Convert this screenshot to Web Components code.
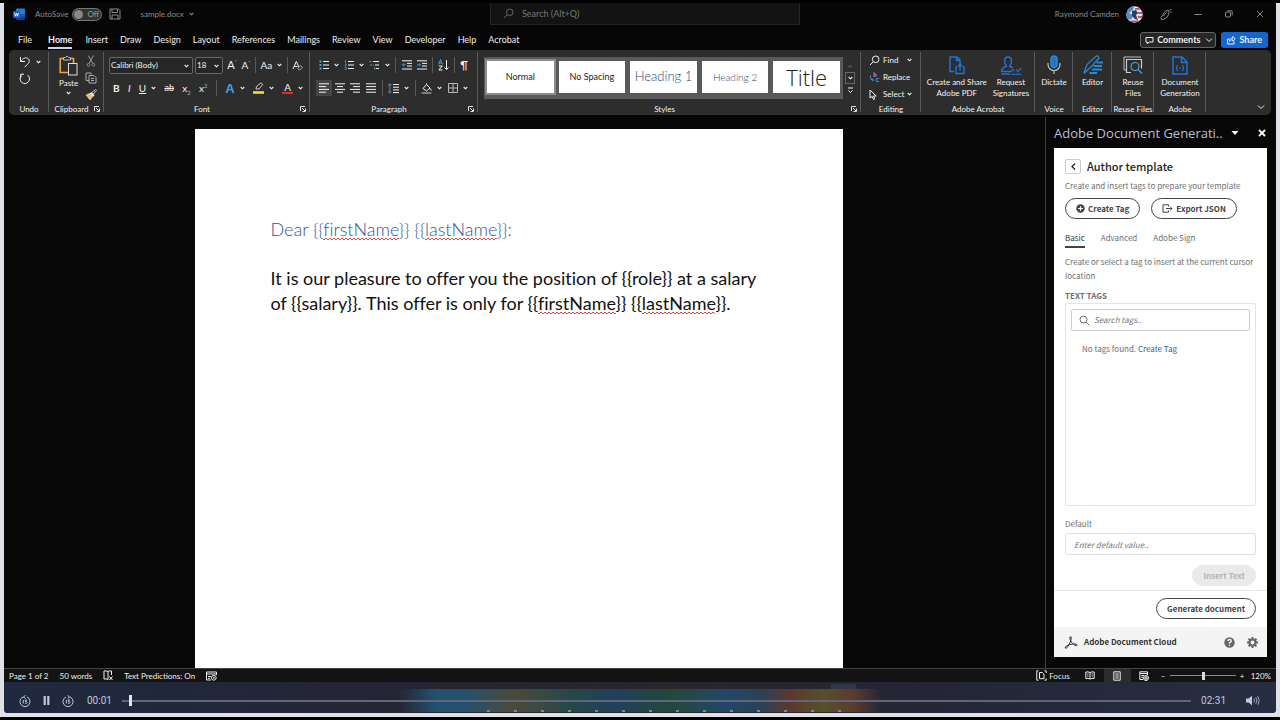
<!DOCTYPE html>
<html lang="en">
<head>
<meta charset="utf-8">
<title>sample.docx - Word</title>
<style>
  html, body { margin: 0; height: 100%; background: #000; }
  body { font: 8px/12px Lato, "Noto Sans", sans-serif; color: #eee; }
</style>
</head>
<body>
<word-window></word-window>

<script>
const RESET = `
  *, *::before, *::after { box-sizing: border-box; }
  :host { box-sizing: border-box; }
  button, input, select { font: inherit; color: inherit; margin: 0; padding: 0; border: 0; background: none; outline: none; }
  button { cursor: pointer; }
  a { color: inherit; text-decoration: none; }
  p, h1, h2 { margin: 0; font: inherit; }
`;

function define(name, css, html) {
  customElements.define(name, class extends HTMLElement {
    connectedCallback() {
      if (this.shadowRoot) return;
      const root = this.attachShadow({ mode: 'open' });
      root.innerHTML = `<style>${RESET}${css}</style>${html(this)}`;
    }
  });
}

/* ---------- icons: [width, height, drawing] ---------- */
const lines = (rows, x2 = 10) => rows.map(([y, a, b]) => `<path d="M${a} ${y}H${b ?? x2}"/>`).join('');
const ICONS = {
  word: [12, 12, '<rect x="3" y="0.5" width="9" height="11" rx="1" fill="#2b7cd3" stroke="none"/><path d="M3 6h9v2.700H3z" fill="#185abd" stroke="none"/><path d="M3 8.700h9V10.500a1 1 0 0 1-1 1H4a1 1 0 0 1-1-1z" fill="#103f91" stroke="none"/><rect x="0" y="3" width="7" height="7" rx="0.600" fill="#185abd" stroke="none"/><path d="M1.500 4.800l1 3.400 1-3 1 3 1-3.400" stroke="#fff" stroke-width=".9"/>'],
  save: [12, 12, '<path d="M1 1h8.500L11 2.500V11H1zM3 1v3.500h5.500V1M3 11V7h6v4"/>'],
  caret: [5, 4, '<path d="M.7 1l1.800 1.800L4.300 1" stroke-width="1.100"/>'],
  chevron: [8, 6, '<path d="M1 1.500l3 3 3-3"/>'],
  solidCaret: [8, 6, '<path d="M.5 1h7L4 5z" fill="currentColor" stroke="none"/>'],
  search: [11, 11, '<circle cx="6.700" cy="4.300" r="3.300"/><path d="M4.300 6.700L1 10"/>'],
  searchTags: [11, 11, '<circle cx="4.500" cy="4.500" r="3.500"/><path d="M7 7l3.500 3.500"/>'],
  pen: [13, 13, '<path d="M4 11.500H2.500L2 9.500 6 3.500 9 2 10 4.500 8.500 9 4 11.500zM4.500 8L7.500 4.500M10.500 1.500l-.8.800M12.500 4l-1.200-.3M12.500 1l-1.500 1.500"/>'],
  minimize: [10, 10, '<path d="M1.500 5.500h7"/>'],
  restore: [10, 10, '<rect x="1.500" y="3" width="5" height="5" rx="1"/><path d="M3.500 1.800h3.700a1 1 0 0 1 1 1v3.700"/>'],
  close: [10, 10, '<path d="M2 2l6 6M8 2L2 8"/>'],
  closeBold: [10, 10, '<path d="M2 2l6 6M8 2L2 8" stroke-width="1.800"/>'],
  comment: [9, 9, '<path d="M1 1.500h7v4.500H4L2.200 8V6H1z"/>'],
  share: [10, 10, '<path d="M3.500 4H1.500v5h6.500V6.500"/><path d="M3.500 6.500c0-2 1-3.300 3.300-3.300V1.500L9.300 4 6.800 6.300V4.800C5 4.800 4.200 5.300 3.500 6.500z"/>'],
  undo: [12, 12, '<path d="M1.500 1v4.500H6M1.700 5.300C4 2 7 1 9 2.500s1.500 4-.5 5.800L5.500 11.300"/>'],
  redo: [12, 12, '<path d="M2.500 2.500A4.700 4.700 0 1 0 8.500 2M5 1.200H1.700V4.500" />'],
  paste: [19, 21, '<path d="M4 3.500H1.200V17.500H9" stroke="#e8a33d" stroke-width="1.600"/><path d="M12 3.500h2.500V8" stroke="#e8a33d" stroke-width="1.600"/><path d="M4.500 5V2.500h2Q8 -.5 9.500 2.500h2V5z" stroke="#bbb"/><rect x="9.500" y="8.500" width="8.500" height="11.500" stroke="#ddd"/>'],
  cut: [10, 12, '<path d="M2.300.5l4.500 8M7.500.5L3 8.500" stroke="#999"/><circle cx="2.500" cy="9.800" r="1.400" stroke="#888"/><circle cx="7.500" cy="9.800" r="1.400" stroke="#888"/>'],
  copy: [12, 12, '<path d="M4 8.500H1V1h5v1.500" stroke="#aaa"/><path d="M4 3.500h5L11 5.500V11H4zM6 6.500h3M6 8.500h3" stroke="#aaa"/>'],
  brush: [12, 11, '<path d="M7 3.500L10.500.5l1 1L8.500 5" stroke="#ccc"/><path d="M1 6l6-2.500L9 6l-4 5z" fill="#f0c060" stroke="#ddd" stroke-width=".6"/><path d="M5.500 4L9 7" stroke="#eee" stroke-width="1.400"/>'],
  launcher: [6, 6, '<path d="M.5 5V.5H5M2 2l3 3M5.500 2.500v3h-3" stroke-width=".9"/>'],
  eraser: [11, 11, '<path d="M1 9L4.300 1.500 7 7M2 6.500h3.500"/><path d="M5.500 8.500l3-3 2 1.700-3 3z" stroke="#d68bd0"/>'],
  bullets: [10, 10, lines([[1.5, 4], [5, 4], [8.5, 4]]) + '<path d="M.5 1.500h2M.5 5h2M.5 8.500h2" stroke="#4a9fd8" stroke-width="1.800"/>'],
  numbers: [10, 10, lines([[1.5, 4], [5, 4], [8.5, 4]]) + '<path d="M1.500 0v3M.8 4h1.400v1L.8 6h1.400M.8 7.500h1.400v2H.8" stroke="#4a9fd8" stroke-width=".8"/>'],
  multilevel: [11, 10, '<path d="M4 1.500h6M6 5h4M7 8.500h3"/><path d="M.5 1.500h2M2 4v2M4 5H5M5 8h1v1.500" stroke="#4a9fd8"/>'],
  outdent: [10, 10, lines([[.8, 0], [3.4, 5], [6, 5], [9, 0]]) + '<path d="M3.800 4.800H.5M2 3.300L.5 4.800 2 6.300" stroke="#4a9fd8" stroke-width=".9"/>'],
  indent: [10, 10, lines([[.8, 0], [3.4, 5], [6, 5], [9, 0]]) + '<path d="M0 4.800h3.500M2 3.300l1.500 1.500L2 6.300" stroke="#4a9fd8" stroke-width=".9"/>'],
  sort: [11, 12, '<path d="M.5 5.500L2.500.5l2 5M1.200 4h2.600" stroke="#4a9fd8"/><path d="M.8 7h3.500L.8 11h3.700M8.500 1v9.500M6.500 8.500l2 2 2-2"/>'],
  left: [10, 10, lines([[.8, 0], [3.6, 0, 7], [6.4, 0], [9.2, 0, 7]])],
  center: [10, 10, lines([[.8, 0], [3.6, 2, 8], [6.4, 0], [9.2, 2, 8]])],
  right: [10, 10, lines([[.8, 0], [3.6, 3], [6.4, 0], [9.2, 3]])],
  justify: [10, 10, lines([[.8, 0], [3.6, 0], [6.4, 0], [9.2, 0]])],
  spacing: [11, 11, lines([[1.5, 5], [4.2, 5], [6.9, 5], [9.6, 5]], 11) + '<path d="M1.800.8v9.400M.3 2.500l1.500-1.700 1.500 1.700M.3 8.500l1.500 1.700 1.500-1.700" stroke="#4a9fd8" stroke-width=".9"/>'],
  bucket: [11, 11, '<path d="M2 5.500L5.500 1.500 9 5 5.500 8zM5.500 1.500V.3M9.500 5.500l.8 2"/><path d="M.5 10h10" stroke="#999" stroke-width="1.600"/>'],
  borders: [10, 10, '<path d="M.5.5h9v9h-9zM5 .5v9M.5 5h9" stroke="#bbb"/>'],
  highlight: [11, 12, '<path d="M3 7l.5-2.500L8 .8 9.800 2.500 6 7z" stroke="#ccc"/><path d="M0 10.500h11" stroke="#f6e23a" stroke-width="2.400"/>'],
  replace: [11, 11, '<path d="M5 0v4.500M5 2.200q2.500-.5 2.500 1T5 4.500" stroke="#c07ad0"/><path d="M1.500 3.500v2Q1.500 8 4 8M3 6.500L4.500 8 3 9.500" stroke="#4a9fd8"/><path d="M9.800 6.500Q7 6 7 8t2.800 1.700" stroke="#4a9fd8"/>'],
  cursor: [8, 11, '<path d="M1 1v8l2-1.700L4.500 10.500 5.800 9.900 4.500 7h2.700z"/>'],
  pdf: [18, 19, '<path d="M6 15.500H2V1h7l3 3v4M8.500 1v3.500H12" stroke="#2272d8" stroke-width="1.500"/><path d="M9.500 11H8v6.500h8V11h-1.500M12 14.500V8.500M10 10.300l2-2 2 2" stroke="#2272d8" stroke-width="1.400"/>'],
  sign: [22, 19, '<path d="M12 15.500H1.500c0-3.500 2-4.500 5-5.300C3 5 4.500 1 8 1s5 4 1.700 9.200c1.500.4 2 1 3 1.800M1.500 18H10" stroke="#2272d8" stroke-width="1.400"/><path d="M11 18.300h10.500M12 13l2 2.500M14 13l-2 2.500M16 15q1-3 1.500 0t1.500-1 2 .5" stroke="#2272d8"/>'],
  mic: [14, 20, '<rect x="3.800" y=".7" width="6.400" height="12" rx="3.200" fill="#1477d4" stroke="#6cb4f0" stroke-width=".6"/><path d="M1 8v1.500a6 6 0 0 0 12 0V8M7 15.500V19" stroke="#ccc" stroke-width="1.100"/>'],
  editor: [20, 20, '<path d="M.8 18.500L4 9.500 13 1.200Q15.500.3 16 3L8.500 11.500z" stroke="#2b88d8" stroke-width="1.200"/><path d="M13.500 7.500H20M10.500 11H19M9 14.500h10M6.500 18H14" stroke="#2b88d8" stroke-width="2"/>'],
  reuse: [20, 18, '<path d="M1 14V1h17M1 14h2" stroke="#bbb"/><path d="M8 16.500H3.500V3.500h15v9" stroke="#ccc" stroke-width="1.200"/><circle cx="12" cy="10.500" r="4" stroke="#4fa3dc" stroke-width="1.200"/><path d="M15 13.500l4 4" stroke="#4fa3dc" stroke-width="1.300"/>'],
  docgen: [16, 19, '<path d="M1 1h9l5 5v12H1zM9.500 1v5.500H15" stroke="#2272d8" stroke-width="1.500"/><path d="M6 9.500Q4.500 9.500 4.800 11q0 1-1 1 1 0 1 1-.3 1.700 1.200 1.700M10 9.500q1.500 0 1.200 1.500 0 1 1 1-1 0-1 1 .3 1.700-1.200 1.700M6.700 12h2.600" stroke="#2272d8" stroke-width="1.200"/>'],
  up: [6, 5, '<path d="M1 3.500l2-2 2 2" stroke="#777"/>'],
  more: [7, 7, '<path d="M1 1h5M1.500 3.500L3.500 5.500l2-2"/>'],
  back: [7, 9, '<path d="M5 1.500l-3 3 3 3" stroke-width="1.300"/>'],
  plus: [9, 9, '<circle cx="4.500" cy="4.500" r="4.200" fill="currentColor" stroke="none"/><path d="M4.500 2.200v4.600M2.200 4.500h4.600" stroke="#fff" stroke-width="1.200"/>'],
  export: [11, 9, '<path d="M6.500 2.500V.8H1v7.400h5.500V6.500M4 4.500h6M8.200 2.700L10 4.500 8.200 6.300"/>'],
  acrobat: [14, 13, '<path d="M6 1q1.500-1 1.300 1.500Q7 5.500 4 10.500 2 13 1 12 .7 10.500 5 8.800 9 7.500 12 8q2 1 .5 1.800Q10.500 10 7.500 6.200 5.200 3 6 1z"/>'],
  help: [11, 11, '<circle cx="5.500" cy="5.500" r="5.200" fill="currentColor" stroke="none"/><path d="M3.800 4.200Q4 2.500 5.600 2.500T7.300 4.200Q7.200 5 5.500 5.800V6.700M5.500 7.700V9" stroke="#fff" stroke-width="1.300"/>'],
  gear: [11, 11, '<circle cx="5.500" cy="5.500" r="3" stroke-width="2.200"/><path d="M5.500 0v2M5.500 9v2M0 5.500h2M9 5.500h2M1.600 1.600L3 3M8 8l1.400 1.400M9.400 1.600L8 3M3 8L1.600 9.400" stroke-width="2"/>'],
  proof: [10, 11, '<path d="M5 1.500Q3 .5 1 1v8q2-.5 4 .5V1.500q1.500-1 3.500-.5v4M6.500 6.500L9.500 10M9.500 6.500l-3 3.500"/>'],
  predict: [11, 10, '<path d="M.5 1h10v3M.5 1v8H5M.5 3h10M2 5.500h3M2 7.300h2"/><circle cx="7.800" cy="6.800" r="2.400"/><circle cx="7.800" cy="6.800" r=".6"/>'],
  focus: [11, 11, '<path d="M2.500.8H.8v9.400h1.700M8.500 10.200h1.700V8.500M10.200 3V.8H8.500M3.500 2.500h2.800L8 4.200v4.500H3.500z"/>'],
  read: [10, 9, '<path d="M5 1.500Q3 .5.8 1v6.500Q3 7 5 8q2-1 4.200-.5V1Q7 .5 5 1.500zM5 1.500V8M2.200 3h1.300M2.200 5h1.300M6.600 3h1.300M6.600 5h1.300"/>'],
  print: [8, 10, '<path d="M.8.8h6.400v8.400H.8zM2.300 3h3.400M2.300 5h3.400M2.300 7h3.400"/>'],
  web: [10, 10, '<path d="M4 8.500H.8V.8h7.700V4M.8 2.500h7.700M2.300 4.500H5M2.300 6.300H4"/><circle cx="7" cy="7" r="2.500"/><path d="M4.500 7h5M7 4.500v5"/>'],
  skipBack: [12, 12, '<path d="M4 2A5 5 0 1 0 8 2M6.500.5L4.300 2l2.200 1.500M4.300 5v3.500M8 5H6.300v1.500Q8.200 6.300 8 7.500T6 8.300"/>'],
  skipForward: [12, 12, '<path d="M4 2A5 5 0 1 0 8 2M5.500.5L7.700 2 5.500 3.500M4.300 5v3.500M8 5H6.300v1.500Q8.200 6.300 8 7.500T6 8.300"/>'],
  pause: [7, 9, '<path d="M1.700 0v9M5.300 0v9" stroke-width="2.200"/>'],
  speaker: [14, 11, '<path d="M0 3.500h2.500L6 .8v9.400L2.500 7.500H0z" fill="currentColor" stroke="none"/><path d="M7.800 3.500q1.300 2 0 4M9.800 2.300q2 3.200 0 6.400M11.800 1.200q2.800 4.300 0 8.600" stroke-width=".8"/>'],
  flag: [17, 17, '<defs><clipPath id="c"><circle cx="8.500" cy="8.500" r="8.200"/></clipPath></defs><g clip-path="url(#c)" stroke="none"><path d="M0 0h17v17H0z" fill="#dfe3f0"/><path d="M9 2h8v1.800H9zM12 6h5v2h-5zM12 10h5v2h-5zM3 14.500h11v1.500H3z" fill="#c8505c"/><path d="M0 0h8L7 4 3 7l4 2-1 4-6 1z" fill="#5a8ac4"/><path d="M6 5l4-1 2 3-2 2 2 5-3-1-3-3z" fill="#26406e"/></g>'],
};
define('ui-icon', `
  :host { display: inline-flex; flex: none; vertical-align: middle; }
  svg { display: block; fill: none; stroke: currentColor; stroke-width: 1; overflow: visible; }
`, el => {
  const [w, h, d] = ICONS[el.getAttribute('name')];
  return `<svg width="${w}" height="${h}" viewBox="0 0 ${w} ${h}" aria-hidden="true">${d}</svg>`;
});

/* ---------- title bar ---------- */
define('title-bar', `
  :host { display: grid; grid-template-columns: 486fr 310px 476fr; height: 22px; color: #8a8a8a; background: #060606; }
  .left, .right { display: flex; align-items: center; }
  .left { padding-left: 9px; }
  .auto { margin: 0 4px 0 10px; }
  .switch { width: 30px; height: 13px; border: 1px solid #777; border-radius: 7px; background: #333; color: #999; display: flex; align-items: center; gap: 4px; padding-left: 1px; line-height: 11px; margin-right: 7px; }
  .switch::before { content: ""; width: 9px; height: 9px; border-radius: 50%; background: #888; }
  .file { margin: 0 5px 0 19px; }
  .search { background: #131313; border: 1px solid #242424; border-top: 0; display: flex; align-items: center; gap: 8px; padding-left: 12px; color: #666; font-size: 9px; }
  input { flex: 1; min-width: 0; }
  input::placeholder { color: #777; opacity: 1; }
  .right { justify-content: flex-end; padding-right: 11px; }
  .right ui-icon { margin-left: 7px; }
  .right button { margin-left: 21px; display: flex; }
  .right button ui-icon { margin: 0; }
  .right button:first-of-type { margin-left: 16px; }
`, () => `
  <div class="left"><ui-icon name="word"></ui-icon><span class="auto">AutoSave</span><button class="switch" role="switch" aria-checked="false">Off</button>
    <ui-icon name="save"></ui-icon><span class="file">sample.docx</span><ui-icon name="caret"></ui-icon></div>
  <label class="search"><ui-icon name="search"></ui-icon><input type="text" aria-label="Search" placeholder="Search (Alt+Q)"></label>
  <div class="right"><span>Raymond Camden</span><ui-icon name="flag"></ui-icon>
    <button aria-label="Coming soon"><ui-icon name="pen"></ui-icon></button><button aria-label="Minimize"><ui-icon name="minimize"></ui-icon></button><button aria-label="Restore"><ui-icon name="restore"></ui-icon></button><button aria-label="Close"><ui-icon name="close"></ui-icon></button></div>`);

/* ---------- menu tabs ---------- */
define('menu-tabs', `
  :host { display: flex; align-items: center; height: 25px; padding: 5px 8px 0 14px; gap: 12px; background: #060606; font-size: 9px; }
  a { display: block; height: 14px; line-height: 14px; }
  a:first-child, style + a { margin-right: 4px; }
  .on { font-weight: 700; border-bottom: 2px solid #ccd6ee; height: 17px; padding-top: 1px; margin-right: 1px; }
  .actions { margin-left: auto; display: flex; gap: 5px; font-weight: 700; }
  .actions button { height: 16px; border-radius: 3px; display: flex; align-items: center; gap: 3px; padding: 0 6px 0 5px; }
  .comments { border: 1px solid #666; background: #262626; }
  .comments ui-icon:last-child { margin-left: 2px; }
  .comments.comments { padding: 0 2px 0 4px; }
  .share { background: #1565d0; }
`, () => `
  ${['File', 'Home', 'Insert', 'Draw', 'Design', 'Layout', 'References', 'Mailings', 'Review', 'View', 'Developer', 'Help', 'Acrobat']
    .map(t => `<a href="#"${t === 'Home' ? ' class="on"' : ''}>${t}</a>`).join('')}
  <div class="actions"><button class="comments"><ui-icon name="comment"></ui-icon>Comments<ui-icon name="chevron"></ui-icon></button>
  <button class="share"><ui-icon name="share"></ui-icon>Share</button></div>`);

/* ---------- ribbon ---------- */
define('ribbon-group', `
  :host { display: flex; flex-direction: column; position: relative; min-width: 0; padding-top: 3px; }
  :host::after { content: ""; position: absolute; right: 0; top: 2px; bottom: 3px; width: 1px; background: #595959; }
  .body { flex: 1; min-height: 0; }
  .label { line-height: 11px; text-align: center; white-space: nowrap; }
  :host([launcher]) .label { padding-right: 10px; }
  button { position: absolute; right: 4px; bottom: 3px; display: flex; }
`, el => `<div class="body"><slot></slot></div><div class="label">${el.getAttribute('label')}</div>
  ${el.hasAttribute('launcher') ? `<button aria-label="${el.getAttribute('label')} settings"><ui-icon name="launcher"></ui-icon></button>` : ''}`);

define('tool-button', `
  :host { display: inline-flex; flex: none; }
  button { display: flex; align-items: center; gap: 5px; line-height: 12px; white-space: nowrap; }
  :host([active]) button { background: #454545; box-shadow: 0 0 0 3px #454545; }
`, el => `<button aria-label="${el.getAttribute('label')}"><slot></slot>${el.getAttribute('icon') ? `<ui-icon name="${el.getAttribute('icon')}"></ui-icon>` : ''}${el.hasAttribute('caret') ? '<ui-icon name="caret"></ui-icon>' : ''}</button>`);

define('combo-box', `
  :host { display: block; position: relative; flex: none; }
  select { appearance: none; width: 100%; height: 17px; border: 1px solid #666; border-radius: 2px; background: #262626; padding-left: 1px; line-height: 14px; }
  ui-icon { position: absolute; right: 4px; top: 7px; pointer-events: none; }
`, el => `<select aria-label="${el.getAttribute('label')}"><option>${el.getAttribute('value')}</option></select><ui-icon name="caret"></ui-icon>`);

define('big-button', `
  :host { display: block; flex: none; }
  button { display: flex; flex-direction: column; align-items: center; line-height: 11px; width: 100%; white-space: nowrap; }
  .pic { height: 24px; display: flex; align-items: center; }
`, el => `<button><span class="pic"><ui-icon name="${el.getAttribute('icon')}"></ui-icon></span><slot></slot></button>`);

define('style-card', `
  :host { display: block; flex: 1; min-width: 0; }
  button { width: 100%; height: 32px; background: #fff; color: #222; white-space: nowrap; overflow: hidden; font-size: 9px; }
  :host([selected]) button { box-shadow: 0 0 0 2px #8c8c8c; }
`, () => `<button><slot></slot></button>`);

define('ribbon-bar', `
  :host { display: grid; height: 65px; margin: 0 5px; border-radius: 5px; background: #2d2d2d; color: #f2f2f2;
    grid-template-columns: 40fr 55fr 206fr 168fr 383fr 60fr 114fr 38fr 39fr 42fr 52fr 65fr; }
  .row { display: flex; align-items: center; justify-content: space-between; height: 22px; }
  .font .row, .para .row { padding: 0 7px 0 9px; }
  .font .row:first-child, .para .row:first-child { height: 24px; }
  .font .row:first-child { padding-left: 5px; }
  .para .row { padding: 0 10px 0 9px; }
  .sep { width: 1px; height: 16px; background: #595959; }
  .pair { display: flex; gap: 2px; }
  .name { width: 84px; } .size { width: 28px; }
  b, i, u, s, .mid { font-size: 10px; } s { font-size: 9px; } sup, sub { font-size: 6px; line-height: 0; color: #7fb8e8; }
  .fx { color: #4a9fd8; font: 700 13px/13px "Liberation Sans", sans-serif; }
  .red { border-bottom: 2px solid #e03020; line-height: 10px; height: 12px; padding: 0 2px; font-size: 10px; }
  .big { font-size: 11px; }
  .undo { display: flex; flex-direction: column; gap: 5px; padding: 3px 0 0 10px; align-items: flex-start; }
  .clip { display: flex; gap: 7px; padding: 2px 0 0 10px; }
  .paste { display: flex; flex-direction: column; align-items: center; line-height: 11px; gap: 2px; }
  .clip .small { display: flex; flex-direction: column; gap: 5px; align-items: center; }
  .styles { display: flex; padding: 4px 6px 0; gap: 2px; }
  .gallery { flex: 1; display: flex; gap: 5px; padding: 4px 3px; background: #595959; }
  .scroll { width: 10px; display: flex; flex-direction: column; align-items: center; justify-content: space-between; padding: 3px 0; }
  .scroll button { display: flex; width: 10px; height: 12px; align-items: center; justify-content: center; }
  .scroll .boxed { border: 1px solid #666; }
  .h1, .h2 { font-weight: 300; color: #1f4a74; }
  .h1 { font-size: 13px; } .h2 { font-size: 10px; } .title { font: 300 22px/28px "Open Sans", sans-serif; }
  .edit { display: flex; flex-direction: column; padding: 1px 0 0 8px; gap: 5px; align-items: flex-start; }
  .edit button { display: flex; align-items: center; height: 12px; gap: 3px; white-space: nowrap; }
  .edit .far { margin-left: 6px; }
  .edit button > :first-child { width: 11px; }
  .pics { display: flex; justify-content: space-evenly; text-align: center; }
  .end { display: flex; align-items: flex-end; justify-content: flex-end; padding: 0 6px 5px 0; }
  .end button { display: flex; }
`, () => `
  <ribbon-group label="Undo"><div class="undo"><tool-button label="Undo" icon="undo" caret></tool-button><tool-button label="Redo" icon="redo"></tool-button></div></ribbon-group>
  <ribbon-group label="Clipboard" launcher><div class="clip"><button class="paste"><ui-icon name="paste"></ui-icon><span>Paste</span><ui-icon name="caret"></ui-icon></button>
    <div class="small"><tool-button label="Cut" icon="cut"></tool-button><tool-button label="Copy" icon="copy"></tool-button><tool-button label="Format painter" icon="brush"></tool-button></div></div></ribbon-group>
  <ribbon-group label="Font" launcher><div class="font">
    <div class="row"><span class="pair"><combo-box class="name" label="Font" value="Calibri (Body)"></combo-box><combo-box class="size" label="Font size" value="18"></combo-box></span>
      <tool-button label="Grow font"><span class="big">A<sup>ˆ</sup></span></tool-button><tool-button label="Shrink font"><span class="mid">A<sup>ˇ</sup></span></tool-button><span class="sep"></span>
      <tool-button label="Change case" caret><span class="mid">Aa</span></tool-button><span class="sep"></span><tool-button label="Clear formatting" icon="eraser"></tool-button></div>
    <div class="row"><tool-button label="Bold"><b>B</b></tool-button><tool-button label="Italic"><i>I</i></tool-button><tool-button label="Underline" caret><u>U</u></tool-button>
      <tool-button label="Strikethrough"><s>ab</s></tool-button><tool-button label="Subscript"><span class="mid">x<sub>2</sub></span></tool-button><tool-button label="Superscript"><span class="mid">x<sup>2</sup></span></tool-button><span class="sep"></span>
      <tool-button label="Text effects" caret><span class="fx">A</span></tool-button><tool-button label="Highlight" icon="highlight" caret></tool-button><tool-button label="Font colour" caret><span class="red">A</span></tool-button></div>
  </div></ribbon-group>
  <ribbon-group label="Paragraph" launcher><div class="para">
    <div class="row"><tool-button label="Bullets" icon="bullets" caret></tool-button><tool-button label="Numbering" icon="numbers" caret></tool-button><tool-button label="Multilevel list" icon="multilevel" caret></tool-button><span class="sep"></span>
      <tool-button label="Decrease indent" icon="outdent"></tool-button><tool-button label="Increase indent" icon="indent"></tool-button><span class="sep"></span><tool-button label="Sort" icon="sort"></tool-button><span class="sep"></span><tool-button label="Show marks"><span class="big">¶</span></tool-button></div>
    <div class="row"><tool-button label="Align left" icon="left" active></tool-button><tool-button label="Centre" icon="center"></tool-button><tool-button label="Align right" icon="right"></tool-button><tool-button label="Justify" icon="justify"></tool-button><span class="sep"></span>
      <tool-button label="Line spacing" icon="spacing" caret></tool-button><span class="sep"></span><tool-button label="Shading" icon="bucket" caret></tool-button><tool-button label="Borders" icon="borders" caret></tool-button></div>
  </div></ribbon-group>
  <ribbon-group label="Styles" launcher><div class="styles"><div class="gallery">
    <style-card selected>Normal</style-card><style-card>No Spacing</style-card><style-card><span class="h1">Heading 1</span></style-card><style-card><span class="h2">Heading 2</span></style-card><style-card><span class="title">Title</span></style-card></div>
    <div class="scroll"><button aria-label="Previous styles"><ui-icon name="up"></ui-icon></button><button class="boxed" aria-label="Next styles"><ui-icon name="caret"></ui-icon></button><button aria-label="More styles"><ui-icon name="more"></ui-icon></button></div></div></ribbon-group>
  <ribbon-group label="Editing"><div class="edit"><button><ui-icon name="search"></ui-icon>Find<ui-icon class="far" name="caret"></ui-icon></button><button><ui-icon name="replace"></ui-icon>Replace</button><button><ui-icon name="cursor"></ui-icon>Select<ui-icon name="caret"></ui-icon></button></div></ribbon-group>
  <ribbon-group label="Adobe Acrobat"><div class="pics"><big-button icon="pdf">Create and Share<br>Adobe PDF</big-button><big-button icon="sign">Request<br>Signatures</big-button></div></ribbon-group>
  <ribbon-group label="Voice"><div class="pics"><big-button icon="mic">Dictate</big-button></div></ribbon-group>
  <ribbon-group label="Editor"><div class="pics"><big-button icon="editor">Editor</big-button></div></ribbon-group>
  <ribbon-group label="Reuse Files"><div class="pics"><big-button icon="reuse">Reuse<br>Files</big-button></div></ribbon-group>
  <ribbon-group label="Adobe"><div class="pics"><big-button icon="docgen">Document<br>Generation</big-button></div></ribbon-group>
  <div class="end"><button aria-label="Collapse ribbon"><ui-icon name="chevron"></ui-icon></button></div>`);

/* ---------- document ---------- */
define('doc-page', `
  :host { display: flex; flex-direction: column; min-width: 0; padding: 12px 12px 0 0; background: #070707; }
  article { flex: 1; width: 100%; max-width: 648px; margin: 0 auto; background: #fff; color: #111; padding: 88px 76px 0;
    font: 18px/25px Lato, "Noto Sans", sans-serif; font-variant-ligatures: none; }
  h1 { color: #2f5590; font-weight: 300; margin-bottom: 24px; }
  .sp { background:
    repeating-linear-gradient(90deg, #d8483c 0 2px, transparent 2px 4px) 0 100% / 100% 1px no-repeat,
    repeating-linear-gradient(90deg, transparent 0 2px, #d8483c 2px 4px) 0 calc(100% - 1px) / 100% 1px no-repeat; }
`, () => `<article>
  <h1>Dear {{<span class="sp">firstName</span>}} {{<span class="sp">lastName</span>}}:</h1>
  <p><span>It is our pleasure to offer you the position of {{role}} at a salary</span> <span>of {{salary}}. This offer is only for {{</span><span class="sp">firstName</span>}} {{<span class="sp">lastName</span>}}.</p></article>`);

/* ---------- task pane ---------- */
define('pill-button', `
  :host { display: inline-flex; }
  button { display: flex; align-items: center; gap: 3px; height: 21px; padding: 0 10px; border-radius: 11px; border: 1px solid #444; color: #444; font-weight: 700; white-space: nowrap; }
  button:disabled { background: #eaeaea; border-color: #eaeaea; color: #b5b5b5; }
`, el => `<button${el.hasAttribute('disabled') ? ' disabled' : ''}>${el.getAttribute('icon') ? `<ui-icon name="${el.getAttribute('icon')}"></ui-icon>` : ''}<slot></slot></button>`);

define('task-pane', `
  :host { display: flex; flex-direction: column; width: 231px; border-left: 1px solid #3c3c3c; background: #070707; padding: 0 9px 11px 8px; }
  header { display: flex; align-items: center; height: 31px; color: #b9bfd6; font: 400 13px/20px "Open Sans", sans-serif; white-space: nowrap; }
  header h1 { flex: 1; }
  header button { color: #fff; display: flex; margin-left: 18px; }
  header button:first-of-type { margin-left: 4px; }
  .card { flex: 1; display: flex; flex-direction: column; background: #fff; color: #6e6e6e; min-height: 0; font-family: "Noto Sans CJK SC", "Noto Sans", sans-serif; }
  .main { flex: 1; display: flex; flex-direction: column; padding: 11px 11px 4px; border-bottom: 1px solid #e6e6e6; }
  .top { display: flex; align-items: center; gap: 6px; color: #222; font-size: 11px; line-height: 15px; font-weight: 500; }
  .top button { width: 16px; height: 15px; border: 1px solid #ccc; border-radius: 2px; display: flex; align-items: center; justify-content: center; }
  .sub { margin-top: 6px; }
  .pills { display: flex; gap: 11px; margin-top: 6px; }
  nav { display: flex; gap: 16px; margin-top: 12px; }
  nav a { line-height: 14px; padding-bottom: 1px; }
  nav .on { color: #333; border-bottom: 2px solid #444; }
  .hint { line-height: 14px; margin-top: 7px; }
  h2 { font-weight: 700; margin-top: 7px; line-height: 12px; }
  .list { flex: 1; border: 1px solid #e4e4e4; border-radius: 2px; margin-top: 1px; padding: 5px; }
  .find { display: flex; align-items: center; gap: 4px; height: 22px; border: 1px solid #ccc; border-radius: 2px; padding-left: 7px; }
  input { min-width: 0; flex: 1; }
  input::placeholder { font-style: italic; color: #777; opacity: 1; }
  .none { padding: 12px 0 0 11px; }
  .none a { color: #2a5fa0; }
  .field { display: flex; flex-direction: column; margin-top: 12px; }
  .field input { height: 22px; border: 1px solid #e0e0e0; border-radius: 2px; padding-left: 8px; margin-top: 3px; flex: none; }
  .end { display: flex; justify-content: flex-end; margin-top: 10px; }
  .gen { padding: 7px 11px 8px; margin: 0; }
  footer { display: flex; align-items: center; height: 30px; padding: 0 9px 0 10px; gap: 6px; background: #f4f4f4; color: #333; font-weight: 700; }
  footer button { display: flex; color: #666; margin-left: 6px; }
  footer span { flex: 1; }
`, () => `
  <header><h1>Adobe Document Generati..</h1><button aria-label="Pane options"><ui-icon name="solidCaret"></ui-icon></button><button aria-label="Close pane"><ui-icon name="closeBold"></ui-icon></button></header>
  <div class="card"><div class="main">
    <div class="top"><button aria-label="Back"><ui-icon name="back"></ui-icon></button><span>Author template</span></div>
    <p class="sub">Create and insert tags to prepare your template</p>
    <div class="pills"><pill-button icon="plus">Create Tag</pill-button><pill-button icon="export">Export JSON</pill-button></div>
    <nav><a href="#" class="on">Basic</a><a href="#">Advanced</a><a href="#">Adobe Sign</a></nav>
    <p class="hint">Create or select a tag to insert at the current cursor location</p>
    <h2>TEXT TAGS</h2>
    <div class="list"><label class="find"><ui-icon name="searchTags"></ui-icon><input type="text" aria-label="Search tags" placeholder="Search tags.."></label>
      <p class="none">No tags found. <a href="#">Create Tag</a></p></div>
    <label class="field">Default<input type="text" placeholder="Enter default value.."></label>
    <div class="end"><pill-button disabled>Insert Text</pill-button></div>
  </div>
  <div class="end gen"><pill-button>Generate document</pill-button></div>
  <footer><ui-icon name="acrobat"></ui-icon><span>Adobe Document Cloud</span><button aria-label="Help"><ui-icon name="help"></ui-icon></button><button aria-label="Settings"><ui-icon name="gear"></ui-icon></button></footer></div>`);

/* ---------- status bar ---------- */
define('status-bar', `
  :host { display: flex; align-items: center; justify-content: space-between; height: 14px; border-top: 1px solid #444; background: #131313; padding: 0 5px; }
  div { display: flex; align-items: center; gap: 11px; }
  .focus { display: flex; align-items: center; gap: 2px; }
  .right { gap: 0; }
  .view { width: 27px; height: 13px; display: flex; align-items: center; justify-content: center; }
  .view.on { background: #2c2c2c; }
  .right > :first-child { margin-right: 7px; }
  .zoom { appearance: none; width: 66px; height: 10px; margin: 0 3px; background: linear-gradient(#888, #888) center / 100% 1px no-repeat; }
  .zoom::-webkit-slider-thumb { appearance: none; width: 3px; height: 8px; background: #ddd; }
  .pct { margin-left: 5px; }
  .step { width: 7px; text-align: center; }
  .view + .step { margin-left: 2px; }
`, () => `
  <div><span>Page 1 of 2</span><span>50 words</span><ui-icon name="proof"></ui-icon><span>Text Predictions: On</span><ui-icon name="predict"></ui-icon></div>
  <div class="right"><button class="focus"><ui-icon name="focus"></ui-icon>Focus</button><button class="view" aria-label="Read mode"><ui-icon name="read"></ui-icon></button><button class="view on" aria-label="Print layout"><ui-icon name="print"></ui-icon></button><button class="view" aria-label="Web layout"><ui-icon name="web"></ui-icon></button><button class="step">−</button><input class="zoom" type="range" min="0" max="100" value="52" aria-label="Zoom"><button class="step">+</button><span class="pct">120%</span></div>`);

/* ---------- video controls over the blurred taskbar ---------- */
define('video-controls', `
  :host { display: flex; align-items: center; height: 31px; padding: 6px 16px 0 15px; position: relative; color: #c3c9dc;
    background: linear-gradient(90deg, #1f2940, #242534 30%, #29262c 52%, #242636 72%, #272d42); }
  .glow { position: absolute; left: 31%; right: 31%; top: 7px; bottom: 1px;
    background: linear-gradient(90deg, transparent, #24516f 8%, #24516f 14%, #4c4a38 24%, #24484a 36%, #223f5c 45%, #22493a 56%, #24466a 68%, #294256 75%, #5c382e 81%, #55512a 88%, #5c3a30 94%, transparent); }
  .dots { position: absolute; left: 38%; right: 34%; bottom: 1px; height: 2px; background: repeating-linear-gradient(90deg, #7e8894 0 3px, transparent 3px 27px); }
  .preview { position: absolute; left: 65%; width: 25px; top: 2px; height: 5px; border-radius: 2px 2px 0 0; background: #34374a; }
  button, .time, input { position: relative; }
  button { display: flex; }
  button + button { margin-left: 12px; }
  .time { font: 10px/12px Roboto, sans-serif; }
  .now { margin: 0 10px 0 13px; }
  .end { margin: 0 20px 0 10px; }
  input { appearance: none; flex: 1; min-width: 0; height: 12px; background: linear-gradient(#60657a, #60657a) center / 100% 2px no-repeat; }
  input::-webkit-slider-thumb { appearance: none; width: 3px; height: 11px; background: #dfe4f2; }
`, () => `<div class="glow"></div><div class="dots"></div><div class="preview"></div>
  <button aria-label="Back 15 seconds"><ui-icon name="skipBack"></ui-icon></button><button aria-label="Pause"><ui-icon name="pause"></ui-icon></button><button aria-label="Forward 15 seconds"><ui-icon name="skipForward"></ui-icon></button>
  <span class="time now">00:01</span><input type="range" min="0" max="151" value="1" aria-label="Position"><span class="time end">02:31</span><button aria-label="Volume"><ui-icon name="speaker"></ui-icon></button>`);

/* ---------- whole window ---------- */
define('word-window', `
  :host { display: flex; flex-direction: column; min-height: 100vh; padding: 3px 0; }
  .frame { flex: 1; display: flex; flex-direction: column; background: #dfe1e7; padding: 0 4px 4px; }
  .app { flex: 1; display: flex; flex-direction: column; background: #070707; border-radius: 0 0 4px 4px; overflow: hidden; }
  .work { flex: 1; display: grid; grid-template-columns: 1fr auto; margin-top: 2px; }
`, () => `<div class="frame"><div class="app"><title-bar></title-bar><menu-tabs></menu-tabs><ribbon-bar></ribbon-bar>
  <div class="work"><doc-page></doc-page><task-pane></task-pane></div><status-bar></status-bar><video-controls></video-controls></div></div>`);
</script>
</body>
</html>
